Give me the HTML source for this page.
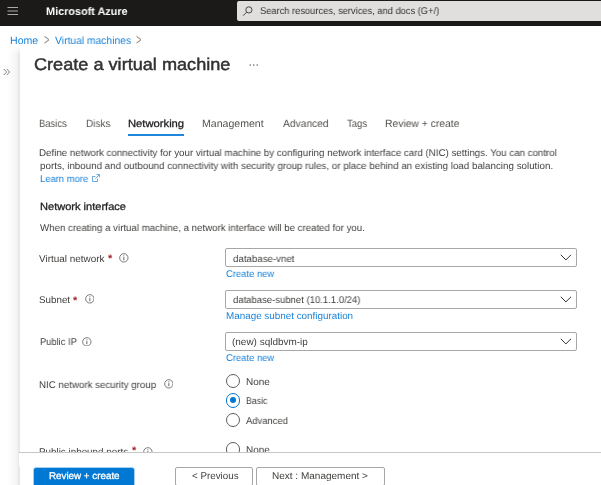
<!DOCTYPE html>
<html><head><meta charset="utf-8">
<style>
html,body{margin:0;padding:0;}
body{width:601px;height:485px;overflow:hidden;background:#fff;position:relative;font-family:"Liberation Sans",sans-serif;color:#323130;}
.x{position:absolute;white-space:nowrap;line-height:1;transform-origin:0 0;will-change:transform;text-rendering:geometricPrecision;}
.a{position:absolute;}
#top{position:absolute;left:0;top:0;width:601px;height:26px;background:#1b1a19;}
#search{position:absolute;left:237px;top:1px;width:364px;height:20px;background:#e1dfdd;border-radius:2px 0 0 2px;}
.sel{position:absolute;left:225px;width:350px;height:17px;border:1px solid #a9a7a5;border-radius:2px;background:#fff;}
.radio{position:absolute;left:225.7px;width:12.4px;height:12.4px;border:1px solid #605e5c;border-radius:50%;background:#fff;}
.btn{position:absolute;top:467px;height:19px;border:1px solid #a9a7a5;border-radius:2px;background:#fff;box-sizing:border-box;}
</style></head><body>
<div id="top"></div>
<svg class="a" style="left:7px;top:6px" width="12" height="10" viewBox="0 0 12 10"><path d="M0.5 1.5h10.5M0.5 5h10.5M0.5 8.5h10.5" stroke="#c4c4c4" stroke-width="0.85"/></svg>
<div id="search"></div>
<svg class="a" style="left:242px;top:5px" width="12" height="12" viewBox="0 0 12 12"><circle cx="6.9" cy="4.9" r="3.1" fill="none" stroke="#4a4846" stroke-width="1"/><path d="M4.7 7.1L1.1 10.7" stroke="#4a4846" stroke-width="1"/></svg>

<div class="a" style="left:6.5px;top:47px;width:13px;height:438px;background:linear-gradient(to right,#ffffff 0%,#f8f8f8 50%,#f3f3f3 78%,#e7e7e7 90%,#e8e8e8 96%,#f6f6f6 100%);"></div><div class="a" style="left:6px;top:47px;width:14px;height:8px;background:linear-gradient(to bottom,rgba(255,255,255,0.9),rgba(255,255,255,0));"></div>
<svg class="a" style="left:3px;top:68px" width="8" height="8" viewBox="0 0 8 8"><path d="M0.8 1L3.6 4L0.8 7M3.8 1L6.6 4L3.8 7" fill="none" stroke="#605e5c" stroke-width="0.8"/></svg>
<svg class="a" style="left:249px;top:63px" width="10" height="4" viewBox="0 0 10 4"><circle cx="1.2" cy="2" r="0.75" fill="#605e5c"/><circle cx="4.7" cy="2" r="0.75" fill="#605e5c"/><circle cx="8.2" cy="2" r="0.75" fill="#605e5c"/></svg>

<div class="a" style="left:128px;top:134px;width:56px;height:2px;background:#1f86dc;"></div>
<svg class="a" style="left:92px;top:174.3px" width="8" height="8" viewBox="0 0 8 8"><path d="M3.4 2.5H0.5V7.5H5.5V4.6M4.6 0.5H7.5V3.4M7.5 0.5L3.4 4.6" fill="none" stroke="#4a9de3" stroke-width="0.85"/></svg>

<div class="sel" style="top:248px;"></div>
<div class="sel" style="top:290px;"></div>
<div class="sel" style="top:332px;"></div>
<svg class="a" style="left:560px;top:254.2px" width="12" height="7" viewBox="0 0 12 7"><path d="M0.8 0.8L5.9 5.9L11 0.8" fill="none" stroke="#323130" stroke-width="1"/></svg>
<svg class="a" style="left:560px;top:296.2px" width="12" height="7" viewBox="0 0 12 7"><path d="M0.8 0.8L5.9 5.9L11 0.8" fill="none" stroke="#323130" stroke-width="1"/></svg>
<svg class="a" style="left:560px;top:338.2px" width="12" height="7" viewBox="0 0 12 7"><path d="M0.8 0.8L5.9 5.9L11 0.8" fill="none" stroke="#323130" stroke-width="1"/></svg>

<!-- required asterisks -->
<div class="x" style="left:108px;top:253.5px;font-size:11px;font-weight:bold;color:#a4262c;">*</div>
<div class="x" style="left:73px;top:295.5px;font-size:11px;font-weight:bold;color:#a4262c;">*</div>
<div class="x" style="left:131.5px;top:446px;font-size:11px;font-weight:bold;color:#a4262c;">*</div>

<!-- info icons -->

<svg class="a info" style="left:119.2px;top:252.9px" width="9.7" height="9.7" viewBox="0 0 10 10"><circle cx="5" cy="5" r="4.3" fill="none" stroke="#605e5c" stroke-width="0.85"/><path d="M5 4.3V7.4M5 2.5V3.5" stroke="#605e5c" stroke-width="1"/></svg>
<svg class="a info" style="left:84.6px;top:294.4px" width="9.7" height="9.7" viewBox="0 0 10 10"><circle cx="5" cy="5" r="4.3" fill="none" stroke="#605e5c" stroke-width="0.85"/><path d="M5 4.3V7.4M5 2.5V3.5" stroke="#605e5c" stroke-width="1"/></svg>
<svg class="a info" style="left:82.1px;top:336.5px" width="9.7" height="9.7" viewBox="0 0 10 10"><circle cx="5" cy="5" r="4.3" fill="none" stroke="#605e5c" stroke-width="0.85"/><path d="M5 4.3V7.4M5 2.5V3.5" stroke="#605e5c" stroke-width="1"/></svg>
<svg class="a info" style="left:163.6px;top:379.3px" width="9.7" height="9.7" viewBox="0 0 10 10"><circle cx="5" cy="5" r="4.3" fill="none" stroke="#605e5c" stroke-width="0.85"/><path d="M5 4.3V7.4M5 2.5V3.5" stroke="#605e5c" stroke-width="1"/></svg>
<svg class="a info" style="left:143.4px;top:447.4px" width="9.7" height="9.7" viewBox="0 0 10 10"><circle cx="5" cy="5" r="4.3" fill="none" stroke="#605e5c" stroke-width="0.85"/><path d="M5 4.3V7.4M5 2.5V3.5" stroke="#605e5c" stroke-width="1"/></svg>
<div class="radio" style="top:373.8px;"></div>
<div class="radio" style="top:393.2px;border-color:#0078d4;"><div style="position:absolute;left:3.25px;top:3.25px;width:6px;height:6px;border-radius:50%;background:#0078d4;"></div></div>
<div class="radio" style="top:412.5px;"></div>
<div class="radio" style="top:442.3px;"></div>

<div class="btn" style="left:34px;top:468px;width:100px;background:#0078d4;border-color:#0078d4;box-shadow:0 0 0 1px rgba(0,120,212,0.35);"></div>
<div class="btn" style="left:174.5px;width:78.5px;"></div>
<div class="btn" style="left:256px;width:128.5px;"></div>
<div class="x" id="ms" style="left:45.55px;top:7px;font-size:11px;font-weight:bold;color:#ffffff;transform:scaleX(0.9876)">Microsoft Azure</div>
<div class="x" id="st" style="left:259.53px;top:7px;font-size:9.8px;font-weight:normal;color:#323130;transform:scaleX(0.9495)">Search resources, services, and docs (G+/)</div>
<div class="x" id="bc1" style="left:9.88px;top:36px;font-size:10.5px;font-weight:normal;color:#1a83d9;transform:scaleX(1.0057)">Home</div>
<div class="x" id="bc2" style="left:43.68px;top:33px;font-size:16px;font-weight:normal;color:#8f8d8b;transform:scaleX(0.5762)">&gt;</div>
<div class="x" id="bc3" style="left:55.02px;top:36px;font-size:10.5px;font-weight:normal;color:#1a83d9;transform:scaleX(0.9828)">Virtual machines</div>
<div class="x" id="bc4" style="left:136.18px;top:33px;font-size:16px;font-weight:normal;color:#8f8d8b;transform:scaleX(0.5762)">&gt;</div>
<div class="x" id="title" style="left:34.15px;top:56px;font-size:17px;font-weight:normal;-webkit-text-stroke:0.45px;color:#323130;transform:scaleX(1.0661)">Create a virtual machine</div>
<div class="x" id="tab1" style="left:39.47px;top:119px;font-size:10.5px;font-weight:normal;color:#55534f;transform:scaleX(0.8944)">Basics</div>
<div class="x" id="tab2" style="left:85.68px;top:119px;font-size:10.5px;font-weight:normal;color:#55534f;transform:scaleX(0.9453)">Disks</div>
<div class="x" id="tab3" style="left:128.42px;top:119px;font-size:10.5px;font-weight:normal;-webkit-text-stroke:0.3px;color:#201f1e;transform:scaleX(1.0680)">Networking</div>
<div class="x" id="tab4" style="left:201.88px;top:119px;font-size:10.5px;font-weight:normal;color:#55534f;transform:scaleX(1.0059)">Management</div>
<div class="x" id="tab5" style="left:283.18px;top:119px;font-size:10.5px;font-weight:normal;color:#55534f;transform:scaleX(0.9786)">Advanced</div>
<div class="x" id="tab6" style="left:347.24px;top:119px;font-size:10.5px;font-weight:normal;color:#55534f;transform:scaleX(0.9072)">Tags</div>
<div class="x" id="tab7" style="left:385.40px;top:119px;font-size:10.5px;font-weight:normal;color:#55534f;transform:scaleX(0.9840)">Review + create</div>
<div class="x" id="d1" style="left:39.47px;top:149px;font-size:9.8px;font-weight:normal;color:#403e3c;transform:scaleX(0.9928)">Define network connectivity for your virtual machine by configuring network interface card (NIC) settings. You can control</div>
<div class="x" id="d2" style="left:39.65px;top:162px;font-size:9.8px;font-weight:normal;color:#403e3c;transform:scaleX(0.9978)">ports, inbound and outbound connectivity with security group rules, or place behind an existing load balancing solution.</div>
<div class="x" id="d3" style="left:39.79px;top:175px;font-size:9.8px;font-weight:normal;color:#1a83d9;transform:scaleX(0.9623)">Learn more</div>
<div class="x" id="h1" style="left:39.67px;top:202px;font-size:10.5px;font-weight:normal;-webkit-text-stroke:0.3px;color:#201f1e;transform:scaleX(1.0529)">Network interface</div>
<div class="x" id="d4" style="left:40.00px;top:224px;font-size:9.8px;font-weight:normal;color:#403e3c;transform:scaleX(0.9876)">When creating a virtual machine, a network interface will be created for you.</div>
<div class="x" id="l1" style="left:39.45px;top:255px;font-size:9.8px;font-weight:normal;color:#403e3c;transform:scaleX(1.0142)">Virtual network</div>
<div class="x" id="s1" style="left:232.71px;top:255px;font-size:9.8px;font-weight:normal;color:#403e3c;transform:scaleX(0.9899)">database-vnet</div>
<div class="x" id="c1" style="left:226.02px;top:270px;font-size:9.8px;font-weight:normal;color:#1a83d9;transform:scaleX(0.9617)">Create new</div>
<div class="x" id="l2" style="left:39.00px;top:296px;font-size:9.8px;font-weight:normal;color:#403e3c;transform:scaleX(0.9914)">Subnet</div>
<div class="x" id="s2" style="left:232.71px;top:296px;font-size:9.8px;font-weight:normal;color:#403e3c;transform:scaleX(0.9708)">database-subnet (10.1.1.0/24)</div>
<div class="x" id="c2" style="left:225.96px;top:312px;font-size:9.8px;font-weight:normal;color:#1a83d9;transform:scaleX(1.0059)">Manage subnet configuration</div>
<div class="x" id="l3" style="left:39.50px;top:338px;font-size:9.8px;font-weight:normal;color:#403e3c;transform:scaleX(0.9528)">Public IP</div>
<div class="x" id="s3" style="left:232.47px;top:338px;font-size:9.8px;font-weight:normal;color:#403e3c;transform:scaleX(1.0165)">(new) sqldbvm-ip</div>
<div class="x" id="c3" style="left:226.02px;top:354px;font-size:9.8px;font-weight:normal;color:#1a83d9;transform:scaleX(0.9617)">Create new</div>
<div class="x" id="l4" style="left:39.47px;top:381px;font-size:9.8px;font-weight:normal;color:#403e3c;transform:scaleX(0.9919)">NIC network security group</div>
<div class="x" id="r1" style="left:245.75px;top:378px;font-size:9.8px;font-weight:normal;color:#403e3c;transform:scaleX(1.0195)">None</div>
<div class="x" id="r2" style="left:245.84px;top:397px;font-size:9.8px;font-weight:normal;color:#403e3c;transform:scaleX(0.8929)">Basic</div>
<div class="x" id="r3" style="left:246.49px;top:417px;font-size:9.8px;font-weight:normal;color:#403e3c;transform:scaleX(0.9607)">Advanced</div>
<div class="x" id="l5" style="left:39.46px;top:448px;font-size:9.8px;font-weight:normal;color:#403e3c;transform:scaleX(1.0040)">Public inbound ports</div>
<div class="x" id="r4" style="left:245.75px;top:446px;font-size:9.8px;font-weight:normal;color:#403e3c;transform:scaleX(1.0195)">None</div>
<div class="x" id="b1" style="left:49.28px;top:472px;font-size:9.8px;font-weight:normal;-webkit-text-stroke:0.3px;color:#ffffff;transform:scaleX(1.0006)">Review + create</div>
<div class="x" id="b2" style="left:191.56px;top:472px;font-size:9.8px;font-weight:normal;color:#403e3c;transform:scaleX(1.0003)">&lt; Previous</div>
<div class="x" id="b3" style="left:272.45px;top:472px;font-size:9.8px;font-weight:normal;color:#403e3c;transform:scaleX(1.0214)">Next : Management &gt;</div>
<div class="a" style="left:19px;top:452px;width:582px;height:14px;background:#fff;border-top:1px solid #c8c6c4;box-sizing:border-box;"></div>
</body></html>
